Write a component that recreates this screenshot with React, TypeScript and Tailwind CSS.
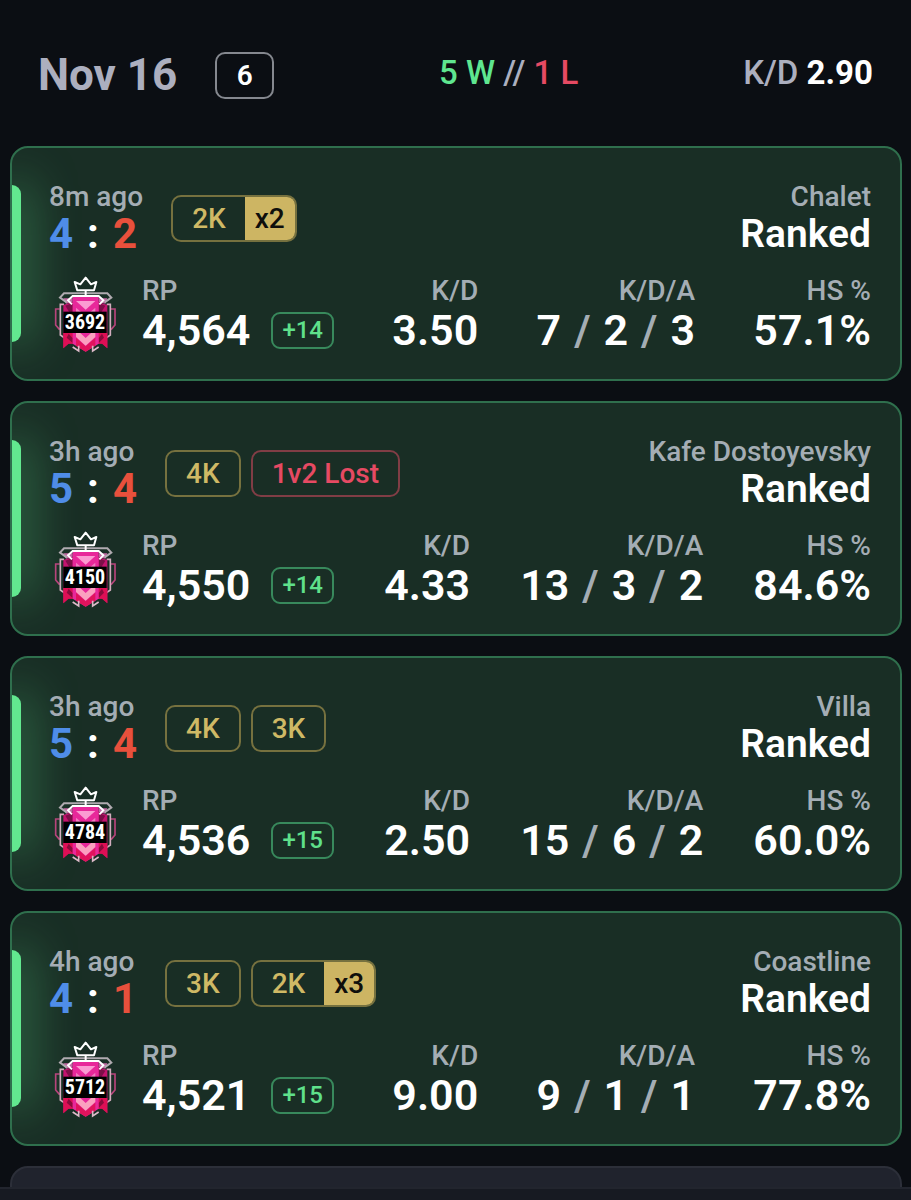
import type { ReactNode } from "react";

type Tag = { label: string; count?: string; tone?: "gold" | "red" };

type Match = {
  time: string;
  score: [number, number];
  tags: Tag[];
  map: string;
  rank: string;
  rp: string;
  delta: string;
  kd: string;
  kda: [number, number, number];
  hs: string;
};

const matches: Match[] = [
  {
    time: "8m ago",
    score: [4, 2],
    tags: [{ label: "2K", count: "x2" }],
    map: "Chalet",
    rank: "3692",
    rp: "4,564",
    delta: "+14",
    kd: "3.50",
    kda: [7, 2, 3],
    hs: "57.1%",
  },
  {
    time: "3h ago",
    score: [5, 4],
    tags: [{ label: "4K" }, { label: "1v2 Lost", tone: "red" }],
    map: "Kafe Dostoyevsky",
    rank: "4150",
    rp: "4,550",
    delta: "+14",
    kd: "4.33",
    kda: [13, 3, 2],
    hs: "84.6%",
  },
  {
    time: "3h ago",
    score: [5, 4],
    tags: [{ label: "4K" }, { label: "3K" }],
    map: "Villa",
    rank: "4784",
    rp: "4,536",
    delta: "+15",
    kd: "2.50",
    kda: [15, 6, 2],
    hs: "60.0%",
  },
  {
    time: "4h ago",
    score: [4, 1],
    tags: [{ label: "3K" }, { label: "2K", count: "x3" }],
    map: "Coastline",
    rank: "5712",
    rp: "4,521",
    delta: "+15",
    kd: "9.00",
    kda: [9, 1, 1],
    hs: "77.8%",
  },
];

function RankBadge({ rank }: { rank: string }) {
  return (
    <svg viewBox="0 0 192 234" className="h-[78px] w-16 shrink-0" fill="none" role="img" aria-label={`Champion rank ${rank}`}>
      {/* outer brackets */}
      <path d="M17 102 H5 V150 L17 164" stroke="#b8447c" strokeWidth="5" />
      <path d="M171 102 H183 V150 L171 164" stroke="#b8447c" strokeWidth="5" />
      <path d="M30 88 H19 V180 L30 188" stroke="#d3aebf" strokeWidth="5" />
      <path d="M158 88 H169 V180 L158 188" stroke="#d3aebf" strokeWidth="5" />
      {/* side ribbons */}
      <path d="M28 90 L58 80 V205 L42 206 L28 220 Z" fill="#c4136f" />
      <path d="M160 90 L131 80 V205 L146 206 L160 220 Z" fill="#c4136f" />
      <path d="M34 92 L56 84 V112 H46 Z" fill="#7d0f48" />
      <path d="M154 92 L134 84 V112 H142 Z" fill="#7d0f48" />
      <path d="M28 174 H58 V206 L44 206 L28 220 Z" fill="#de0f55" />
      <path d="M160 174 H131 V206 L144 206 L160 220 Z" fill="#de0f55" />
      <path d="M44 176 L56 190 V204 L38 188 Z" fill="#8a0b3c" />
      <path d="M144 176 L134 190 V204 L150 188 Z" fill="#8a0b3c" />
      <path d="M28 70 H56 V80 L36 86 Z" fill="#c26aa4" />
      <path d="M160 70 H134 V80 L154 86 Z" fill="#c26aa4" />
      {/* shield */}
      <path d="M56 66 H134 V206 L95 230 L56 206 Z" fill="#e8289a" />
      <path d="M66 78 H124 L95 104 Z" fill="#fb9bd2" />
      <path d="M66 98 L82 112 H66 Z" fill="#f27cc0" />
      <path d="M124 98 L108 112 H124 Z" fill="#f27cc0" />
      <path d="M66 173 H78 L95 189 L112 173 H124 V186 L95 212 L66 186 Z" fill="#fba0bf" />
      <path d="M66 188 L95 214 L124 188 V212 L95 230 L66 212 Z" fill="#e0135c" />
      <path d="M56 216 L74 228 V212" stroke="#dcb9c8" strokeWidth="5" />
      <path d="M134 216 L116 228 V212" stroke="#dcb9c8" strokeWidth="5" />
      {/* frame */}
      <path d="M38 82 L18 68 L30 55 H160 L172 68 L152 82" stroke="#b0aab0" strokeWidth="6" />
      <path d="M54 88 L42 76 L56 63 H134 L148 76 L136 88" stroke="#ffffff" strokeWidth="6" />
      {/* crown */}
      <path d="M95 46 V60" stroke="#ffffff" strokeWidth="6" />
      <path d="M70 46 L62 21 L79 28 L95 8 L111 28 L127 21 L120 46 Z" stroke="#ffffff" strokeWidth="6" strokeLinejoin="round" />
      {/* rank number */}
      <rect x="28" y="110" width="130" height="64" fill="#000000" />
      <text
        x="93"
        y="163"
        textAnchor="middle"
        fontSize="60"
        fontWeight="700"
        fill="#ffffff"
        className="font-['Roboto_Condensed','Liberation_Sans_Narrow',Roboto,sans-serif]"
      >
        {rank}
      </text>
    </svg>
  );
}

function TagPill({ tag }: { tag: Tag }) {
  const tone =
    tag.tone === "red" ? "border-[#803d45] text-[#e64a63]" : "border-[#76713f] text-[#cfb965]";
  return (
    <li className={`flex h-[47px] items-stretch overflow-hidden rounded-[10px] border-2 text-[28px] leading-[43px] font-medium ${tone}`}>
      <span className="px-[19px]">{tag.label}</span>
      {tag.count && <span className="bg-[#cdb563] px-[10px] text-[#0f0f0c]">{tag.count}</span>}
    </li>
  );
}

function Stat({ label, children }: { label: string; children: ReactNode }) {
  return (
    <div className="text-right">
      <dt className="text-[28px] leading-8 font-medium text-[#a4adb4]">{label}</dt>
      <dd className="text-[43px] leading-[46px] font-semibold text-white">{children}</dd>
    </div>
  );
}

function MatchCard({ match }: { match: Match }) {
  const [kills, deaths, assists] = match.kda;
  return (
    <li className="relative overflow-hidden rounded-[18px] border-2 border-[#2f6f4d] bg-[#192e25] pt-[33px] pr-[29px] pb-[26px] pl-[37px]">
      <span className="absolute top-[37px] bottom-[37px] left-0 w-[9px] rounded-r-[9px] bg-[#62e88f] shadow-[0_0_48px_4px_rgba(98,232,143,0.6)]" />
      <div className="relative flex items-center justify-between">
        <div className="flex items-center gap-7">
          <div>
            <p className="text-[28px] leading-8 font-medium text-[#a4adb4]">{match.time}</p>
            <p className="flex gap-[14px] text-[42px] leading-[42px] font-bold text-white">
              <span className="text-[#4f8de8]">{match.score[0]}</span>
              <span>:</span>
              <span className="text-[#e8503c]">{match.score[1]}</span>
            </p>
          </div>
          <ul className="flex gap-[10px]">
            {match.tags.map((tag) => (
              <TagPill key={tag.label} tag={tag} />
            ))}
          </ul>
        </div>
        <div className="text-right">
          <p className="text-[28px] leading-8 font-medium text-[#a4adb4]">{match.map}</p>
          <p className="text-[39px] leading-[42px] font-semibold text-white">Ranked</p>
        </div>
      </div>
      <div className="relative mt-5 flex items-center">
        <div className="mr-6 ml-[5px] flex">
          <RankBadge rank={match.rank} />
        </div>
        <dl className="flex flex-1 items-center justify-between">
          <div>
            <dt className="text-[28px] leading-8 font-medium text-[#a4adb4]">RP</dt>
            <dd className="flex items-center gap-[21px] text-[43px] leading-[46px] font-semibold text-white">
              {match.rp}
              <span className="rounded-[9px] border-2 border-[#38895c] px-[9px] text-2xl leading-[33px] font-medium text-[#5fe08b]">
                {match.delta}
              </span>
            </dd>
          </div>
          <Stat label="K/D">{match.kd}</Stat>
          <Stat label="K/D/A">
            <span className="flex justify-end gap-[13px]">
              <span>{kills}</span>
              <span className="text-[#a4adb4]">/</span>
              <span>{deaths}</span>
              <span className="text-[#a4adb4]">/</span>
              <span>{assists}</span>
            </span>
          </Stat>
          <Stat label="HS %">{match.hs}</Stat>
        </dl>
      </div>
    </li>
  );
}

export default function App() {
  return (
    <div className="flex h-screen flex-col overflow-hidden bg-[#0b0e13] font-[Roboto,sans-serif]">
      <main className="min-h-0 flex-1 overflow-hidden">
        <header className="flex h-[146px] items-center justify-between px-[38px] pt-1">
          <div className="flex items-center gap-[38px]">
            <h1 className="text-[44px] leading-[52px] font-bold text-[#acafbf]">Nov 16</h1>
            <span className="w-[59px] rounded-[10px] border-2 border-[#85888f] text-center text-[28px] leading-[43px] font-semibold text-white">
              6
            </span>
          </div>
          <p className="pb-1 text-[33px] leading-10 font-medium text-[#acafbf]">
            <span className="text-[#5fe690]">5 W</span> // <span className="text-[#e64a63]">1 L</span>
          </p>
          <p className="pb-1 text-[33px] leading-10 font-medium text-[#acafbf]">
            K/D <span className="font-bold text-white">2.90</span>
          </p>
        </header>
        <ul className="flex flex-col gap-5 pr-[9px] pl-[10px]">
          {matches.map((match) => (
            <MatchCard key={match.map} match={match} />
          ))}
          <li className="h-[235px] rounded-[18px] border-2 border-[#2c2f39] bg-[#20232d]" />
        </ul>
      </main>
      <footer className="h-[13px] shrink-0 border-t-2 border-[#22252e] bg-[#171a22]" />
    </div>
  );
}
